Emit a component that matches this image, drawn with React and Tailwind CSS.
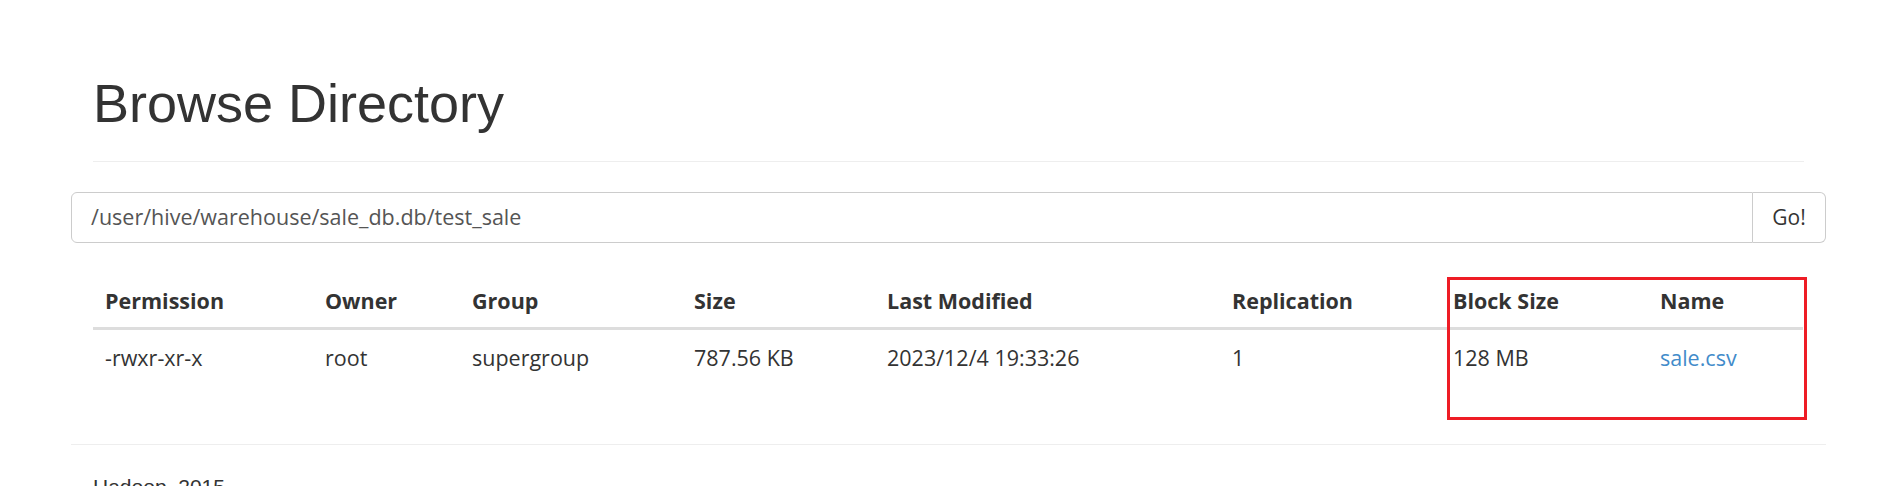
import React from "react";

const cols = [
  { h: "Permission", v: "-rwxr-xr-x", w: "w-[220px]" },
  { h: "Owner", v: "root", w: "w-[147px]" },
  { h: "Group", v: "supergroup", w: "w-[222px]" },
  { h: "Size", v: "787.56 KB", w: "w-[193px]" },
  { h: "Last Modified", v: "2023/12/4 19:33:26", w: "w-[345px]" },
  { h: "Replication", v: "1", w: "w-[221px]" },
  { h: "Block Size", v: "128 MB", w: "w-[207px]" },
  { h: "Name", v: "sale.csv", w: "w-[155px]", link: true },
];

export default function App() {
  return (
    <div className="w-full h-[486px] overflow-hidden bg-white">
      <div className="w-[1755px] ml-[71px]">
        <div className="mx-[22px] pt-[74px] pb-[13px] border-b-[1.5px] border-[#eeeeee] mb-[30px]">
          <h1
            className="text-[54px] leading-[59px] text-[#333333] mb-[15px]"
            style={{ fontFamily: '"Liberation Sans", Arial, sans-serif' }}
          >
            Browse Directory
          </h1>
        </div>

        <div
          className="flex h-[51px]"
          style={{ fontFamily: '"Open Sans", "Noto Sans", sans-serif' }}
        >
          <div className="flex-1 flex items-center border border-[#cccccc] rounded-l-[6px] pl-[19px] text-[21.5px] text-[#555555] bg-white">
            /user/hive/warehouse/sale_db.db/test_sale
          </div>
          <div className="w-[73px] flex items-center justify-center border border-l-0 border-[#cccccc] rounded-r-[6px] text-[21px] text-[#333333] bg-white">
            Go!
          </div>
        </div>

        <div
          className="relative mx-[22px] mt-[30px]"
          style={{ fontFamily: '"Open Sans", "Noto Sans", sans-serif' }}
        >
          <table className="table-fixed w-[1710px] border-collapse text-[21.5px] text-[#333333]">
            <colgroup>
              {cols.map((c) => (
                <col key={c.h} className={c.w} />
              ))}
            </colgroup>
            <thead>
              <tr>
                {cols.map((c) => (
                  <th
                    key={c.h}
                    className="text-left font-bold px-[12px] pt-[13px] pb-[11px] leading-[30px] border-b-[3px] border-[#dddddd]"
                  >
                    {c.h}
                  </th>
                ))}
              </tr>
            </thead>
            <tbody>
              <tr>
                {cols.map((c) => (
                  <td
                    key={c.h}
                    className="px-[12px] pt-[13px] pb-[11px] leading-[30px] whitespace-nowrap"
                  >
                    {c.link ? (
                      <span className="text-[#428bca]">{c.v}</span>
                    ) : (
                      c.v
                    )}
                  </td>
                ))}
              </tr>
            </tbody>
          </table>
          <div className="absolute left-[1354px] top-[4px] w-[360px] h-[143px] border-[3.5px] border-[#ee1c25] pointer-events-none" />
        </div>

        <div className="mt-[60px] border-t-[1.5px] border-[#eeeeee]" />
        <div
          className="mx-[22px] mt-[27px] text-[21px] leading-[30px] text-[#333333]"
          style={{ fontFamily: '"Liberation Sans", Arial, sans-serif' }}
        >
          Hadoop, 2015.
        </div>
      </div>
    </div>
  );
}
